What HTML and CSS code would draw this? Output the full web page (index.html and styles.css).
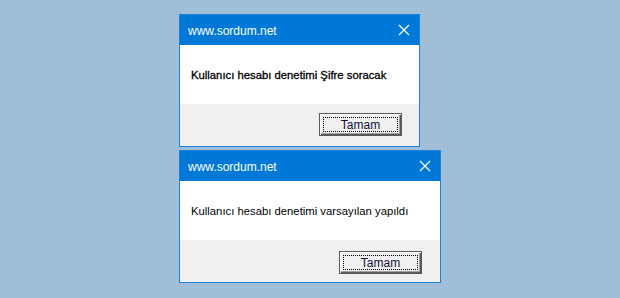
FILE: index.html
```html
<!DOCTYPE html>
<html>
<head>
<meta charset="utf-8">
<link rel="stylesheet" href="styles.css">
</head>
<body>
<div class="stage">
  <div class="dialog d1">
    <div class="titlebar">
      <span class="title">www.sordum.net</span>
      <svg class="close" width="12" height="12" viewBox="0 0 12 12"><path d="M1 1L11 11M11 1L1 11" stroke="#fff" stroke-width="1.2" fill="none"/></svg>
    </div>
    <div class="content"><span class="msg strong">Kullanıcı hesabı denetimi Şifre soracak</span></div>
    <div class="footer"><button class="btn"><span class="focus">Tamam</span></button></div>
  </div>
  <div class="dialog d2">
    <div class="titlebar">
      <span class="title">www.sordum.net</span>
      <svg class="close" width="12" height="12" viewBox="0 0 12 12"><path d="M1 1L11 11M11 1L1 11" stroke="#fff" stroke-width="1.2" fill="none"/></svg>
    </div>
    <div class="content"><span class="msg">Kullanıcı hesabı denetimi varsayılan yapıldı</span></div>
    <div class="footer"><button class="btn"><span class="focus">Tamam</span></button></div>
  </div>
</div>
</body>
</html>
```

FILE: styles.css
```css
html, body {
  margin: 0;
  padding: 0;
  background: #a0bed8;
  width: 620px;
  height: 298px;
  overflow: hidden;
}
.stage {
  display: flex;
  flex-direction: column;
  align-items: flex-start;
  gap: 3px;
  padding: 14px 0 0 179px;
}
.dialog {
  box-sizing: border-box;
  border: 1px solid #1a82d8;
  display: flex;
  flex-direction: column;
  background: #fff;
}
.d1 { width: 241px; height: 133px; }
.d2 { width: 262px; height: 133px; }
.titlebar {
  height: 30px;
  background: #0078d7;
  display: flex;
  align-items: center;
  justify-content: space-between;
  padding: 0 9px 0 8px;
}
.title {
  color: #fff;
  font-family: "Liberation Sans", Arial, sans-serif;
  font-size: 12px;
  line-height: 1;
  padding-top: 1px;
}
.close { display: block; }
.content {
  height: 59px;
  display: flex;
  align-items: center;
  padding-left: 11px;
  background: #fff;
}
.msg {
  font-family: "Liberation Sans", Arial, sans-serif;
  font-size: 11.3px;
  color: #000;
  padding-top: 1px;
}
.msg.strong { -webkit-text-stroke: 0.3px #000; }
.footer {
  flex: 1;
  background: #f0f0f0;
  display: flex;
  justify-content: flex-end;
  align-items: flex-start;
  padding: 9px 17px 0 0;
}
.d2 .footer { padding: 11px 18px 0 0; }
.btn {
  box-sizing: border-box;
  width: 83px;
  height: 23px;
  margin: 0;
  padding: 3px;
  background: #f0f0f0;
  border: 1px solid #5a5a5a;
  box-shadow: inset 1px 1px 0 #fff, inset -1px -1px 0 #5a5a5a, inset -2px -2px 0 #a0a0a0;
  display: flex;
}
.focus {
  flex: 1;
  border: 1px dotted #000;
  display: flex;
  align-items: center;
  justify-content: center;
  font-family: "Liberation Sans", Arial, sans-serif;
  font-size: 12px;
  color: #10103a;
}
```
